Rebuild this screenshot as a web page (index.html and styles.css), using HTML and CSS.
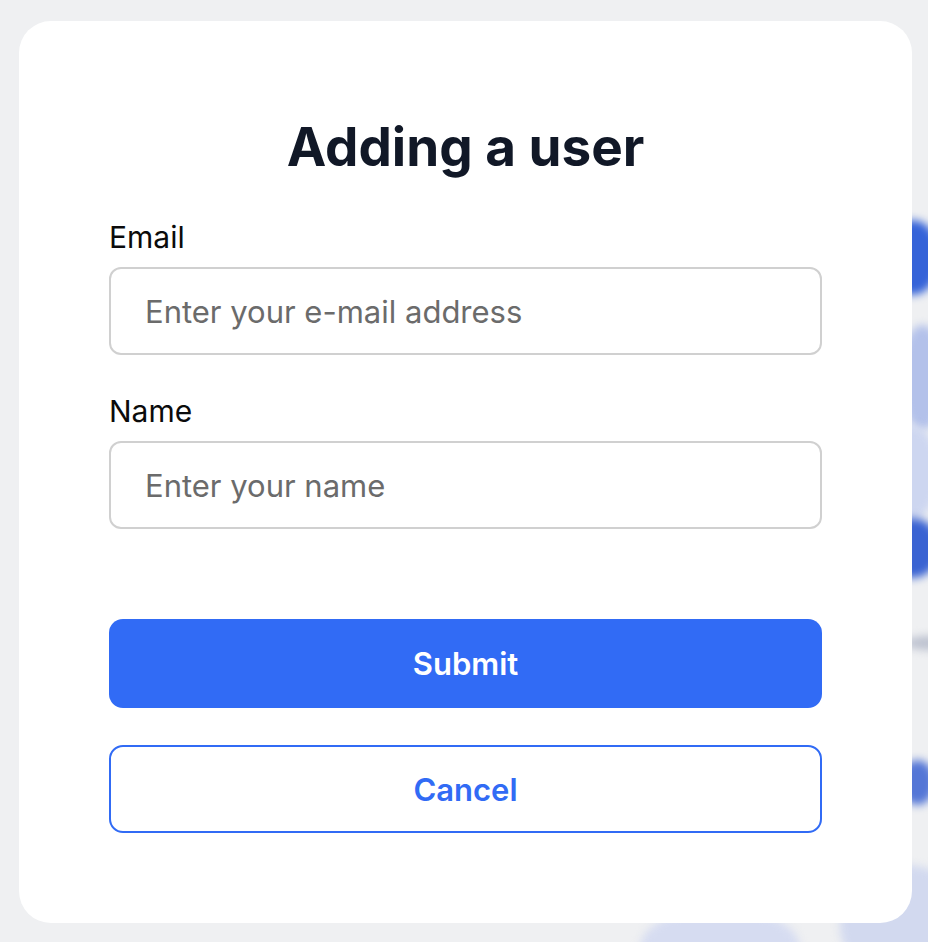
FILE: index.html
```html
<!DOCTYPE html>
<html lang="en">
<head>
  <meta charset="UTF-8" />
  <meta name="viewport" content="width=device-width, initial-scale=1.0" />
  <title>Adding a user</title>
  <link rel="stylesheet" href="styles.css">
</head>
<body>
  <div class="backdrop">
    <span class="blob blob-1"></span>
    <span class="blob blob-2"></span>
    <span class="blob blob-3"></span>
    <span class="blob blob-4"></span>
    <span class="blob blob-5"></span>
    <span class="blob blob-6"></span>
    <span class="blob blob-7"></span>
    <span class="blob blob-8"></span>
  </div>

  <div class="page">
    <div class="modal">
      <h1>Adding a user</h1>

      <form class="user-form">
        <div class="field">
          <label for="email">Email</label>
          <input type="email" id="email" placeholder="Enter your e-mail address" />
        </div>
        <div class="field">
          <label for="name">Name</label>
          <input type="text" id="name" placeholder="Enter your name" />
        </div>

        <div class="actions">
          <button type="submit" class="btn btn-primary">Submit</button>
          <button type="button" class="btn btn-outline">Cancel</button>
        </div>
      </form>
    </div>
  </div>
</body>
</html>
```

FILE: styles.css
```css
* {
  box-sizing: border-box;
}

body {
  margin: 0;
  height: 942px;
  overflow: hidden;
  position: relative;
  font-family: Inter, "Noto Sans", sans-serif;
  background-color: #eff0f2;
}

/* blurred shapes peeking out behind the modal */
.backdrop {
  position: absolute;
  inset: 0;
  overflow: hidden;
}

.blob {
  position: absolute;
  border-radius: 50%;
  filter: blur(4px);
}

.blob-1 { left: 885px; top: 220px; width: 55px; height: 75px; background: #3563d8; }
.blob-2 { left: 900px; top: 325px; width: 45px; height: 105px; background: #b3c1ea; }
.blob-3 { left: 880px; top: 425px; width: 60px; height: 95px; background: #cdd6f0; }
.blob-4 { left: 885px; top: 518px; width: 55px; height: 60px; background: #3a63d2; }
.blob-5 { left: 905px; top: 636px; width: 50px; height: 14px; background: #bcc1cf; }
.blob-6 { left: 900px; top: 760px; width: 35px; height: 45px; background: #5476d6; }
.blob-7 { left: 640px; top: 908px; width: 160px; height: 80px; background: #d6dcf1; }
.blob-8 { left: 840px; top: 865px; width: 130px; height: 120px; background: #d2d9ef; }

.page {
  position: relative;
  padding: 21px 16px 19px 19px;
}

.modal {
  background-color: #fff;
  border-radius: 32px;
  height: 902px;
  padding: 95px 90px 0;
}

.modal h1 {
  margin: 0;
  text-align: center;
  font-size: 53px;
  line-height: 63px;
  font-weight: 700;
  color: #111827;
}

.user-form {
  margin-top: 40px;
}

.field + .field {
  margin-top: 38px;
}

label {
  display: block;
  font-size: 30px;
  line-height: 36px;
  color: #0b0b0b;
}

input {
  display: block;
  width: 100%;
  height: 88px;
  margin-top: 12px;
  padding: 0 34px;
  border: 2px solid #d0d0d0;
  border-radius: 12px;
  font-family: inherit;
  font-size: 31px;
  color: #111827;
  outline: none;
}

input::placeholder {
  color: #6b6b6b;
}

.actions {
  margin-top: 90px;
  display: flex;
  flex-direction: column;
  gap: 37px;
}

.btn {
  height: 89px;
  border-radius: 14px;
  font-family: inherit;
  font-size: 31px;
  font-weight: 600;
  cursor: pointer;
}

.btn-primary {
  background-color: #316bf5;
  border: none;
  color: #fff;
}

.btn-outline {
  height: 88px;
  background-color: #fff;
  border: 2px solid #316bf5;
  color: #316bf5;
}
```
